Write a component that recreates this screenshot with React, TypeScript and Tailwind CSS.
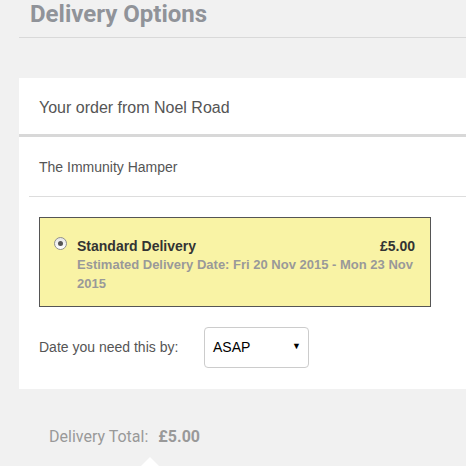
export default function App() {
  return (
    <div className="w-full h-[466px] overflow-hidden bg-[#f1f1f1] font-['Liberation_Sans',Arial,sans-serif]">
      {/* Page title */}
      <div className="ml-[19px] h-[38px] border-b border-[#d9d9d9]">
        <h1 className="pl-[11px] pt-[2px] text-[24px] leading-[24px] font-bold text-[#909399] font-['Roboto',sans-serif]">
          Delivery Options
        </h1>
      </div>

      {/* Order panel */}
      <div className="ml-[19px] mt-[40px] bg-white h-[311px]">
        <div className="h-[56px] flex items-center pl-[20px] pt-[3px] text-[16px] text-[#555]">
          Your order from Noel Road
        </div>
        <div className="h-[3px] bg-[#d8d8d8]" />

        <div className="h-[59px] flex items-center pl-[20px] pt-[1px] text-[14px] text-[#555]">
          The Immunity Hamper
        </div>
        <div className="ml-[10px] h-px bg-[#dddddd]" />

        {/* Delivery option */}
        <div className="ml-[20px] mt-[20px] w-[392px] border border-[#555] bg-[#f9f3a5] pt-[20px] pb-[13px] pl-[14px] pr-[15px] flex">
          <span className="mt-[-1px] w-[13px] h-[13px] rounded-full border border-[#8f8f8f] bg-gradient-to-b from-[#e6e6e6] to-[#ffffff] flex items-center justify-center shrink-0">
            <span className="w-[5px] h-[5px] rounded-full bg-[#555]" />
          </span>
          <div className="ml-[10px] flex-1 font-bold">
            <div className="flex justify-between text-[14px] leading-[17px] text-[#333]">
              <span>Standard Delivery</span>
              <span>£5.00</span>
            </div>
            <div className="text-[13px] leading-[19px] text-[#999]">
              Estimated Delivery Date: Fri 20 Nov 2015 - Mon 23 Nov 2015
            </div>
          </div>
        </div>

        {/* Date selector */}
        <div className="mt-[20px] pl-[20px] flex items-center">
          <span className="text-[14px] text-[#555] w-[165px]">Date you need this by:</span>
          <div className="relative w-[105px] h-[41px] rounded-[4px] border border-[#cccccc] bg-white flex items-center pl-[8px] text-[14px] text-black">
            ASAP
            <span className="absolute right-[7px] top-[14px] text-[9px] leading-none">▼</span>
          </div>
        </div>
      </div>

      {/* Totals */}
      <div className="relative pl-[49px] pt-[38px] text-[16px] leading-[20px] text-[#999] font-['Roboto',sans-serif]">
        <span>Delivery Total:</span>
        <span className="ml-[10px] font-bold">£5.00</span>
        <span className="absolute left-[141px] top-[68px] w-0 h-0 border-l-[9px] border-r-[9px] border-b-[9px] border-l-transparent border-r-transparent border-b-white" />
      </div>
    </div>
  );
}
